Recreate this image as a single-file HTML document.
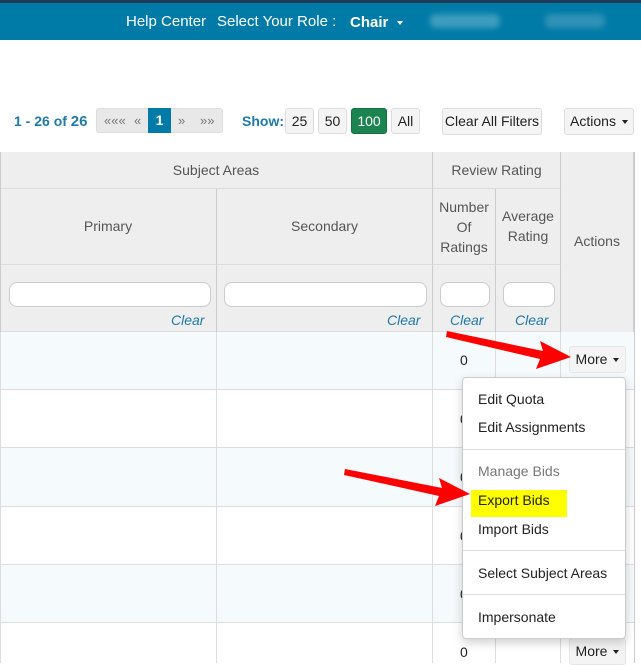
<!DOCTYPE html>
<html><head><style>
*{box-sizing:border-box;margin:0;padding:0}
body{width:641px;height:663px;overflow:hidden;background:#fff;font-family:"Liberation Sans",Arial,sans-serif;font-size:14px;color:#333;position:relative}
.a{position:absolute}
.top{left:0;top:0;width:641px;height:40px;background:#007ba7;border-top:3px solid #1f3b57}
.btn{position:absolute;height:26px;border:1px solid #ddd;background:#f4f4f4;border-radius:3px;font-size:14px;color:#222;text-align:center;line-height:24px}
.caret{display:inline-block;width:0;height:0;border-left:3.5px solid transparent;border-right:3.5px solid transparent;border-top:4px solid currentColor;vertical-align:middle;margin-left:6px}
.h{background:#eee;border-right:1px solid #ccc;border-bottom:1px solid #ddd;color:#555;text-align:center}
.v{position:absolute;top:152px;height:511px;width:1px;background:#ddd}
.in{position:absolute;height:25px;background:#fff;border:1px solid #ccc;border-radius:8px}
.clr{position:absolute;font-style:italic;color:#1f7aa6;font-size:14px}
.row{position:absolute;left:0;width:634px;border-bottom:1px solid #ddd}
.z{position:absolute;left:460px;font-size:14px;color:#222}
.mi{position:absolute;left:478px;font-size:14px;color:#222}
.pg{position:absolute;top:113px;font-size:13px;color:#777}
</style></head><body>
<div class="a top"></div>
<div class="a" style="left:126px;top:13px;color:#fff;font-size:15px">Help Center</div>
<div class="a" style="left:217px;top:13px;color:#fff;font-size:15px">Select Your Role :</div>
<div class="a" style="left:350px;top:14px;color:#fff;font-size:15px;font-weight:bold">Chair<span class="caret" style="margin-left:9px"></span></div>
<div class="a" style="left:430px;top:14px;width:70px;height:14px;background:#3d9dbf;border-radius:6px;filter:blur(3px)"></div>
<div class="a" style="left:545px;top:14px;width:60px;height:14px;background:#2f92b6;border-radius:6px;filter:blur(3px)"></div>

<div class="a" style="left:14px;top:113px;color:#1f7aa6;font-weight:bold;font-size:14px">1 - 26 of <span style="font-size:15px">26</span></div>
<div class="a" style="left:96px;top:108px;width:127px;height:25px;background:#e8e8e8;border:1px solid #ddd;border-radius:3px"></div>
<div class="pg" style="left:104px">«««</div>
<div class="pg" style="left:134px">«</div>
<div class="a" style="left:148px;top:108px;width:23px;height:25px;background:#007ba7;color:#fff;font-weight:bold;text-align:center;line-height:24px">1</div>
<div class="pg" style="left:178px">»</div>
<div class="pg" style="left:200px">»»</div>
<div class="a" style="left:242px;top:113px;color:#1f7aa6;font-weight:bold">Show:</div>
<div class="btn" style="left:285px;top:108px;width:29px">25</div>
<div class="btn" style="left:318px;top:108px;width:29px">50</div>
<div class="btn" style="left:351px;top:108px;width:36px;background:#1b8450;color:#fff;border-color:#177043">100</div>
<div class="btn" style="left:391px;top:108px;width:29px">All</div>
<div class="btn" style="left:442px;top:108px;width:100px;height:27px">Clear All Filters</div>
<div class="btn" style="left:564px;top:108px;width:70px;height:27px">Actions<span class="caret"></span></div>

<div class="a h" style="left:0;top:152px;width:433px;height:37px;line-height:36px">Subject Areas</div>
<div class="a h" style="left:433px;top:152px;width:128px;height:37px;line-height:36px">Review Rating</div>
<div class="a h" style="left:561px;top:152px;width:73px;height:180px;line-height:178px;border-bottom:none">Actions</div>
<div class="a h" style="left:0;top:189px;width:217px;height:76px;line-height:74px">Primary</div>
<div class="a h" style="left:217px;top:189px;width:216px;height:76px;line-height:74px">Secondary</div>
<div class="a h" style="left:433px;top:189px;width:63px;height:76px;padding-top:8px;line-height:20px">Number Of Ratings</div>
<div class="a h" style="left:496px;top:189px;width:65px;height:76px;padding-top:17px;line-height:20px">Average Rating</div>
<div class="a h" style="left:0;top:265px;width:561px;height:67px;border-right:none"></div>
<div class="a" style="left:216px;top:265px;width:1px;height:67px;background:#ccc"></div>
<div class="a" style="left:432px;top:265px;width:1px;height:67px;background:#ccc"></div>
<div class="a" style="left:495px;top:265px;width:1px;height:67px;background:#ccc"></div>
<div class="a" style="left:560px;top:265px;width:1px;height:67px;background:#ccc"></div>
<div class="a" style="left:0;top:152px;width:1px;height:180px;background:#ccc"></div>
<div class="a" style="left:634px;top:152px;width:1px;height:511px;background:#ccc"></div>
<div class="in" style="left:9px;top:282px;width:202px"></div>
<div class="in" style="left:224px;top:282px;width:203px"></div>
<div class="in" style="left:440px;top:282px;width:50px"></div>
<div class="in" style="left:503px;top:282px;width:52px"></div>
<div class="clr" style="left:171px;top:312px">Clear</div>
<div class="clr" style="left:387px;top:312px">Clear</div>
<div class="clr" style="left:450px;top:312px">Clear</div>
<div class="clr" style="left:515px;top:312px">Clear</div>

<div class="row" style="top:332px;height:58px;background:#f5fafc"></div>
<div class="row" style="top:390px;height:58px"></div>
<div class="row" style="top:448px;height:59px;background:#f5fafc"></div>
<div class="row" style="top:507px;height:58px"></div>
<div class="row" style="top:565px;height:58px;background:#f5fafc"></div>
<div class="row" style="top:623px;height:40px;border:none"></div>
<div class="v" style="left:0;top:332px;height:331px"></div>
<div class="v" style="left:216px;top:332px;height:331px"></div>
<div class="v" style="left:432px;top:332px;height:331px"></div>
<div class="v" style="left:495px;top:332px;height:331px"></div>
<div class="v" style="left:560px;top:332px;height:331px"></div>
<div class="z" style="top:352px">0</div>
<div class="z" style="top:411px">0</div>
<div class="z" style="top:469px">0</div>
<div class="z" style="top:528px">0</div>
<div class="z" style="top:586px">0</div>
<div class="z" style="top:644px">0</div>
<div class="btn" style="left:569px;top:346px;width:57px;height:27px;border-color:#e6e6e6;line-height:25px">More<span class="caret"></span></div>
<div class="btn" style="left:569px;top:638px;width:57px;height:27px;border-color:#e6e6e6;line-height:25px">More<span class="caret"></span></div>

<div class="a" style="left:462px;top:377px;width:164px;height:262px;background:#fff;border:1px solid #ccc;border-radius:4px;box-shadow:0 4px 10px rgba(0,0,0,.18)"></div>
<div class="mi" style="top:391px">Edit Quota</div>
<div class="mi" style="top:419px">Edit Assignments</div>
<div class="a" style="left:463px;top:449px;width:162px;height:1px;background:#ddd"></div>
<div class="mi" style="top:463px;color:#777">Manage Bids</div>
<div class="a" style="left:471px;top:490px;width:96px;height:27px;background:#ffff00"></div>
<div class="mi" style="top:492px">Export Bids</div>
<div class="mi" style="top:521px">Import Bids</div>
<div class="a" style="left:463px;top:550px;width:162px;height:1px;background:#ddd"></div>
<div class="mi" style="top:565px">Select Subject Areas</div>
<div class="a" style="left:463px;top:594px;width:162px;height:1px;background:#ddd"></div>
<div class="mi" style="top:609px">Impersonate</div>

<svg class="a" style="left:0;top:0" width="641" height="663">
<polygon points="447,331 543,351 540,341 571,357 536,369 540,359 446,337" fill="#f00"/>
<polygon points="345,469 442,488 439,478 470,494 435,506 439,496 344,475" fill="#f00"/>
</svg>
</body></html>
